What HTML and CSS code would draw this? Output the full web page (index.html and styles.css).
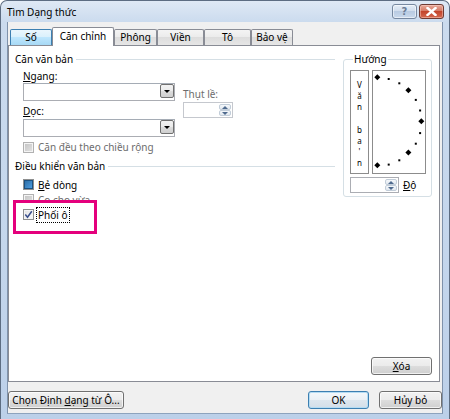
FILE: index.html
```html
<!DOCTYPE html>
<html lang="vi">
<head>
<meta charset="utf-8">
<title>Tìm Dạng thức</title>
<link rel="stylesheet" href="styles.css">
</head>
<body>
<div class="window">
  <div class="titlebar">
    <span class="title">Tìm Dạng thức</span>
    <div class="caption-btns">
      <span class="cap help">?</span>
      <span class="cap close">
        <svg width="11" height="9" viewBox="0 0 11 9"><path d="M1.5 1 L9.5 8 M9.5 1 L1.5 8" stroke="#fff" stroke-width="2.4" stroke-linecap="square"/></svg>
      </span>
    </div>
  </div>

  <div class="client">
    <div class="tabs">
      <div class="tab hover w-so">Số</div>
      <div class="tab active w-can">Căn chỉnh</div>
      <div class="tab w-phong">Phông</div>
      <div class="tab w-vien">Viền</div>
      <div class="tab w-to">Tô</div>
      <div class="tab w-bao">Bảo vệ</div>
    </div>

    <div class="page">
      <div class="cols">
        <div class="left">
          <div class="group-title"><span>Căn văn bản</span><i class="rule"></i></div>

          <div class="align-row">
            <div class="align-main">
              <div class="label"><u>N</u>gang:</div>
              <div class="combo"><span class="combo-btn"><i class="tri"></i></span></div>
              <div class="label label-doc"><u>D</u>ọc:</div>
              <div class="combo combo-doc"><span class="combo-btn"><i class="tri"></i></span></div>
            </div>
            <div class="align-side">
              <div class="label disabled">Thụt lề:</div>
              <div class="spin spin-indent">
                <span class="spin-btns"><span class="sb up"></span><span class="sb down"></span></span>
              </div>
            </div>
          </div>

          <div class="check-row first-check">
            <span class="box box-disabled"></span><span class="disabled">Căn đều theo chiều rộng</span>
          </div>

          <div class="group-title group-two"><span>Điều khiển văn bản</span><i class="rule"></i></div>

          <div class="check-row">
            <span class="box box-mixed"></span><span><u>B</u>ẻ dòng</span>
          </div>
          <div class="check-row">
            <span class="box box-disabled"></span><span class="disabled">Co cho vừa</span>
          </div>
          <div class="check-row check-front">
            <span class="box box-checked">
              <svg width="9" height="9" viewBox="0 0 9 9"><path d="M1.3 4.6 L3.5 7.2 L7.8 1.2" fill="none" stroke="#3a4f8c" stroke-width="1.5"/></svg>
            </span><span class="focus">Phối ô</span>
          </div>
        </div>

        <fieldset class="orient">
          <legend>Hướng</legend>
          <div class="orient-boxes">
            <div class="vtext">
              <span>V</span><span>ă</span><span>n</span><span>&nbsp;</span><span>b</span><span>a</span><span class="tick">'</span><span>n</span>
            </div>
            <div class="dial">
              <svg width="52" height="102" viewBox="0 0 52 102">
                <g fill="#000">
                  <!-- major marks every 45 degrees -->
                  <path d="M4.3 3.3 l3 3 l-3 3 l-3 -3z"/>
                  <path d="M35.4 16.2 l3 3 l-3 3 l-3 -3z"/>
                  <path d="M48.3 47.3 l3 3 l-3 3 l-3 -3z"/>
                  <path d="M35.4 78.4 l3 3 l-3 3 l-3 -3z"/>
                  <path d="M4.3 91.3 l3 3 l-3 3 l-3 -3z"/>
                  <!-- minor marks every 15 degrees -->
                  <rect x="14.7" y="7" width="2" height="2"/>
                  <rect x="25.3" y="11.3" width="2" height="2"/>
                  <rect x="41.8" y="27.9" width="2" height="2"/>
                  <rect x="46.1" y="38.5" width="2" height="2"/>
                  <rect x="46.1" y="61.1" width="2" height="2"/>
                  <rect x="41.8" y="71.7" width="2" height="2"/>
                  <rect x="25.3" y="88.3" width="2" height="2"/>
                  <rect x="14.7" y="92.6" width="2" height="2"/>
                </g>
              </svg>
            </div>
          </div>
          <div class="deg-row">
            <div class="spin spin-deg">
              <span class="spin-btns"><span class="sb up"></span><span class="sb down"></span></span>
            </div>
            <span><u>Đ</u>ộ</span>
          </div>
        </fieldset>
      </div>

      <div class="page-foot">
        <button class="btn btn-clear" type="button"><u>X</u>óa</button>
      </div>
    </div>

    <div class="footer">
      <button class="btn btn-pick" type="button">Chọn Định <u>d</u>ạng từ Ô...</button>
      <button class="btn btn-ok default" type="button">OK</button>
      <button class="btn btn-cancel" type="button">Hủy bỏ</button>
    </div>
  </div>
</div>
<div class="highlight"></div>
</body>
</html>
```
FILE: styles.css
```css
* { box-sizing: border-box; }

html, body {
  margin: 0;
  padding: 0;
  width: 450px;
  height: 419px;
  overflow: hidden;
  background: #fff;
}

body {
  position: relative;
  font-family: "Noto Sans", "Open Sans", sans-serif;
  font-size: 10px;
  line-height: 14px;
  color: #000;
}

u { text-decoration: underline; text-underline-offset: 1px; }

/* ---------- window frame ---------- */
.window {
  width: 450px;
  height: 419px;
  display: flex;
  flex-direction: column;
  padding: 0 6px 5px 6px;
  border: 1px solid #5d6d82;
  border-bottom: none;
  border-radius: 7px 7px 0 0;
  background: linear-gradient(to bottom, #dfe9f5 0, #cbdbee 21px, #c4d6ec 60%, #bcd0e9 100%);
}

.titlebar {
  height: 21px;
  flex: none;
  display: flex;
  align-items: flex-start;
  justify-content: space-between;
}

.title {
  margin-top: 4px;
  line-height: 14px;
  font-size: 10px;
  color: #000;
}

.caption-btns {
  display: flex;
  gap: 2px;
  margin-top: 3px;
  margin-right: -1px;
}

.cap {
  width: 25px;
  height: 15px;
  border-radius: 3px;
  display: flex;
  align-items: center;
  justify-content: center;
}

.help {
  border: 1px solid #7688a0;
  background: linear-gradient(to bottom, #e4edf7 0, #cfdcec 50%, #b9cbe2 50%, #c9d9ec 100%);
  box-shadow: inset 0 0 0 1px rgba(255,255,255,.55);
  color: #6c7d96;
  font-family: "DejaVu Sans", sans-serif;
  font-weight: bold;
  font-size: 10px;
  line-height: 13px;
}

.close {
  border: 1px solid #6e3b33;
  background: linear-gradient(to bottom, #e9a99a 0, #d57b66 45%, #c3452c 50%, #d4694f 100%);
  box-shadow: inset 0 0 0 1px rgba(255,220,210,.45);
}

/* ---------- client area ---------- */
.client {
  flex: 1;
  min-height: 0;
  display: flex;
  flex-direction: column;
  background: #f0f0f0;
  border-left: 1px solid #7f92ab;
  border-right: 1px solid #7f92ab;
  border-bottom: 1px solid #8ea3bd;
}

.tabs {
  height: 23px;
  flex: none;
  display: flex;
  align-items: flex-end;
  padding-left: 2px;
}

.tab {
  height: 16px;
  border: 1px solid #898c95;
  border-bottom: none;
  border-radius: 2px 2px 0 0;
  background: linear-gradient(to bottom, #f4f4f4 0, #ebebeb 50%, #dddddd 50%, #e6e6e6 100%);
  text-align: center;
  line-height: 14px;
}

.tab.hover {
  border-color: #3c7fb1;
  background: linear-gradient(to bottom, #eaf6fd 0, #d9f0fc 50%, #bee6fd 50%, #a7d9f5 100%);
}

.tab.active {
  height: 19px;
  margin-bottom: -1px;
  background: #fff;
  line-height: 16px;
  position: relative;
  z-index: 1;
}

.w-so { width: 42px; }
.w-can { width: 62px; }
.w-phong { width: 43px; }
.w-vien { width: 47px; }
.w-to { width: 47px; }
.w-bao { width: 42px; }

/* ---------- tab page ---------- */
.page {
  flex: 1;
  min-height: 0;
  margin: 0 2px 0 0;
  background: #fff;
  border: 1px solid #898c95;
  display: flex;
  flex-direction: column;
  padding: 6px 7px 6px 6px;
}

.cols {
  display: flex;
  align-items: flex-start;
  gap: 8px;
}

.left {
  width: 320px;
  flex: none;
}

.group-title {
  display: flex;
  align-items: center;
  height: 14px;
}

.group-title .rule {
  flex: 1;
  height: 0;
  border-top: 1px solid #d5dfe5;
  margin-left: 3px;
  margin-top: 1px;
}

.group-two { margin-top: 5px; }

.label { height: 14px; }
.disabled { color: #6d6d6d; }

.align-row {
  display: flex;
  gap: 8px;
  padding-left: 8px;
  margin-top: 3px;
}

.align-main { width: 152px; }

.label-doc { margin-top: 3px; }

.combo {
  height: 18px;
  border: 1px solid #abadb3;
  border-top-color: #a5acb5;
  background: #fff;
  display: flex;
  justify-content: flex-end;
  padding: 1px;
}

.combo-doc { margin-top: 1px; }

.combo-btn {
  width: 14px;
  height: 100%;
  border: 1px solid #707070;
  border-radius: 2px;
  background: linear-gradient(to bottom, #f2f2f2 0, #ebebeb 50%, #dddddd 50%, #cfcfcf 100%);
  display: flex;
  align-items: center;
  justify-content: center;
  margin: -1px -1px -1px 0;
}

.tri {
  width: 0;
  height: 0;
  border-left: 3px solid transparent;
  border-right: 3px solid transparent;
  border-top: 3px solid #000;
  margin-top: 1px;
}

.align-side {
  width: 50px;
  padding-top: 18px;
}

.spin {
  height: 16px;
  border: 1px solid #c5c8ce;
  background: #fff;
  display: flex;
  justify-content: flex-end;
}

.spin-indent { margin-top: 1px; width: 50px; }

.spin-btns {
  width: 13px;
  display: flex;
  flex-direction: column;
  padding: 1px 1px 1px 0;
}

.sb {
  flex: 1;
  border: 1px solid #c2cdd9;
  border-radius: 2px;
  background: linear-gradient(to bottom, #f5f8fb, #e2e8ef);
  display: flex;
  align-items: center;
  justify-content: center;
}

.sb::after {
  content: "";
  width: 0;
  height: 0;
  border-left: 3px solid transparent;
  border-right: 3px solid transparent;
}

.sb.up::after { border-bottom: 3px solid #4f6a8e; }
.sb.down::after { border-top: 3px solid #4f6a8e; }

/* ---------- checkboxes ---------- */
.check-row {
  display: flex;
  align-items: center;
  height: 15px;
  padding-left: 8px;
  gap: 4px;
}

.first-check { margin-top: 3px; height: 14px; }
.group-two + .check-row { margin-top: 4px; }

/* the last row stays readable above the annotation frame */
.check-front {
  position: relative;
  z-index: 2;
}

.box {
  width: 11px;
  height: 11px;
  flex: none;
  border: 1px solid #8e8f8f;
  background: linear-gradient(135deg, #dcdcdc 0, #fbfbfb 100%);
  box-shadow: inset 0 0 0 1px #f4f4f4;
  display: flex;
  align-items: center;
  justify-content: center;
}

.box-mixed::after {
  content: "";
  width: 7px;
  height: 7px;
  border: 1px solid #1c5180;
  background: linear-gradient(135deg, #2e6fa6 0, #4c9ce0 100%);
}

.box-disabled {
  border-color: #b1b1b1;
  background: #f4f4f4;
}

.box-disabled::after {
  content: "";
  width: 7px;
  height: 7px;
  background: linear-gradient(135deg, #c6c6c6 0, #e0e0e0 100%);
}

.box-checked { background: linear-gradient(135deg, #e1e1e1 0, #fcfcfc 100%); }

.focus {
  outline: 1px dotted #000;
  outline-offset: 0;
  padding: 0 1px;
  margin-left: -1px;
  line-height: 14px;
}

/* ---------- orientation group ---------- */
.orient {
  width: 90px;
  margin: 0;
  padding: 4px 5px 3px 6px;
  border: 1px solid #d5dfe5;
  border-radius: 3px;
  min-width: 0;
}

.orient legend {
  padding: 0 1px;
  margin-left: 3px;
  line-height: 14px;
  font-size: 10px;
}

.orient-boxes {
  display: flex;
  gap: 3px;
  height: 104px;
}

.vtext {
  width: 20px;
  border: 1px solid #8c8c8c;
  display: flex;
  flex-direction: column;
  align-items: center;
  padding-top: 8px;
  font-size: 8px;
  line-height: 11.2px;
}

.vtext span { height: 11.2px; line-height: 11.2px; }

.dial {
  width: 54px;
  border: 1px solid #8c8c8c;
}

.dial svg { display: block; }

.deg-row {
  display: flex;
  align-items: center;
  gap: 4px;
  margin-top: 3px;
}

.spin-deg { width: 49px; border-color: #abadb3; }

/* ---------- buttons ---------- */
.btn {
  height: 18px;
  padding: 0;
  border: 1px solid #707070;
  border-radius: 3px;
  background: linear-gradient(to bottom, #f2f2f2 0, #ebebeb 50%, #dddddd 50%, #cfcfcf 100%);
  box-shadow: inset 0 0 0 1px rgba(255,255,255,.7);
  font-family: "Noto Sans", "Open Sans", sans-serif;
  font-size: 10px;
  line-height: 14px;
  color: #000;
}

.btn.default {
  border-color: #3c7fb1;
  box-shadow: inset 0 0 0 1px #b5dcf3;
  background: linear-gradient(to bottom, #f4f8fb 0, #eaf0f5 50%, #dde6ee 50%, #d3dee8 100%);
}

.page-foot {
  margin-top: auto;
  display: flex;
  justify-content: flex-end;
}

.btn-clear { width: 61px; }

.footer {
  height: 31px;
  flex: none;
  display: flex;
  align-items: flex-start;
  padding: 9px 0 0 0;
  gap: 10px;
}

.btn-pick { width: 116px; margin-right: auto; }
.btn-ok { width: 61px; }
.btn-cancel { width: 63px; }

/* ---------- annotation frame drawn over the dialog ---------- */
.highlight {
  position: absolute;
  left: 13px;
  top: 200px;
  width: 84px;
  height: 34px;
  border: 3px solid #e4007c;
  background: #fff;
  z-index: 1;
}
```
